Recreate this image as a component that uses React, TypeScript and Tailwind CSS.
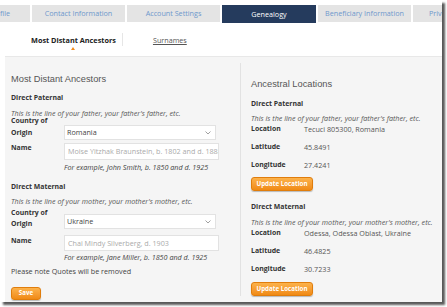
import React from 'react';

const tabs = ['Contact Information', 'Account Settings', 'Genealogy', 'Beneficiary Information'];

const Chevron: React.FC = () => (
  <svg width="6" height="4" viewBox="0 0 6 4" className="mr-[4px]">
    <path d="M0.5 0.5 L3 3 L5.5 0.5" fill="none" stroke="#888" strokeWidth="0.8" />
  </svg>
);

const OrangeButton: React.FC<{ label: string; className?: string }> = ({ label, className }) => (
  <button
    className={`rounded-[3px] border border-[#e07d0c] bg-gradient-to-b from-[#fcb24a] to-[#f08a12] text-white font-bold text-[6.2px] leading-none shadow-[0_1px_1px_rgba(0,0,0,0.25)] ${className || ''}`}
  >
    {label}
  </button>
);

const App: React.FC = () => {
  return (
    <div className="w-[447px] h-[307px] bg-white font-['Open_Sans',sans-serif]">
      <div className="w-[442px] h-[302px] bg-white overflow-hidden shadow-[3px_3px_2px_rgba(0,0,0,0.65)] flex flex-col">
        {/* tabs */}
        <div className="flex gap-[2px] pt-[5px] h-[23px] shrink-0 text-[7.2px]">
          <div className="shrink-0 w-[30px] h-[17px] bg-[#e4e4e4] flex items-center justify-end pr-[20px] text-[#6e98cc] overflow-hidden whitespace-nowrap">
            Profile
          </div>
          {tabs.map((t) => (
            <div
              key={t}
              className={
                t === 'Genealogy'
                  ? 'shrink-0 w-[94px] h-[18px] bg-[#253b5d] text-white flex items-center justify-center'
                  : 'shrink-0 w-[93px] h-[17px] bg-[#e4e4e4] text-[#6e98cc] flex items-center justify-center'
              }
            >
              {t}
            </div>
          ))}
          <div className="shrink-0 w-[40px] h-[17px] bg-[#e4e4e4] text-[#6e98cc] flex items-center pl-[16px] overflow-hidden whitespace-nowrap">
            Privacy
          </div>
        </div>

        {/* sub tabs */}
        <div className="h-[33px] shrink-0 flex items-start pt-[10px] text-[7.2px] leading-[14px]">
          <div className="ml-[31px] relative text-[7.3px] font-bold text-[#222]">
            Most Distant Ancestors
            <span className="absolute left-[40px] top-[14px] w-0 h-0 border-l-[2.5px] border-r-[2.5px] border-b-[3px] border-l-transparent border-r-transparent border-b-[#f28c1c]" />
          </div>
          <div className="ml-[6px] w-px h-[13px] bg-[#e6e6e6]" />
          <span className="ml-[30px] text-[#555] underline">Surnames</span>
        </div>

        {/* panel */}
        <div className="ml-[5px] flex-1 bg-[#f5f5f5] border-t border-[#e8e8e8] flex">
          {/* left */}
          <div className="w-[235px] pl-[6px] flex flex-col text-[7.2px] text-[#333]">
            <div className="mt-[15px] font-['Liberation_Sans',sans-serif] text-[9.3px] leading-[14px] text-[#555]">
              Most Distant Ancestors
            </div>
            <div className="mt-[6px] font-bold text-[6.9px] leading-[12px]">Direct Paternal</div>
            <div className="mt-[3px] italic text-[#555] leading-[12px]">This is the line of your father, your father's father, etc.</div>
            <div className="mt-[-4px] flex items-start">
              <div className="w-[53px] font-bold text-[6.9px] leading-[11.5px]">Country of<br />Origin</div>
              <div className="mt-[10px] w-[152px] h-[15px] bg-white border border-[#e2e2e2] flex items-center justify-between pl-[2px]">
                <span className="text-[#444]">Romania</span>
                <Chevron />
              </div>
            </div>
            <div className="mt-[2px] flex items-start">
              <div className="w-[53px] font-bold text-[6.9px] leading-[12px]">Name</div>
              <div className="mt-[1px] w-[155px] h-[17px] bg-white border border-[#e2e2e2] flex items-center pl-[3px] overflow-hidden whitespace-nowrap text-[#aaa]">
                Moise Yitzhak Braunstein, b. 1802 and d. 1888
              </div>
            </div>
            <div className="mt-[1px] ml-[53px] italic text-[#444] leading-[12px]">For example, John Smith, b. 1850 and d. 1925</div>

            <div className="mt-[8px] font-bold text-[6.9px] leading-[12px]">Direct Maternal</div>
            <div className="mt-[2px] italic text-[#555] leading-[12px]">This is the line of your mother, your mother's mother, etc.</div>
            <div className="flex items-start">
              <div className="w-[53px] font-bold text-[6.9px] leading-[11px]">Country of<br />Origin</div>
              <div className="mt-[7px] w-[152px] h-[15px] bg-white border border-[#e2e2e2] flex items-center justify-between pl-[2px]">
                <span className="text-[#444]">Ukraine</span>
                <Chevron />
              </div>
            </div>
            <div className="mt-[6px] flex items-start">
              <div className="w-[53px] font-bold text-[6.9px] leading-[12px]">Name</div>
              <div className="w-[155px] h-[16px] bg-white border border-[#e2e2e2] flex items-center pl-[3px] overflow-hidden whitespace-nowrap text-[#aaa]">
                Chai Mindy Silverberg, d. 1903
              </div>
            </div>
            <div className="ml-[53px] italic text-[#444] leading-[12px]">For example, Jane Miller, b. 1850 and d. 1925</div>
            <div className="mt-[2px] leading-[12px] text-[#444]">Please note Quotes will be removed</div>
            <OrangeButton label="Save" className="mt-[10px] w-[30px] h-[13px]" />
          </div>

          {/* divider */}
          <div className="mt-[6px] mb-[6px] w-px bg-[#e2e2e2]" />

          {/* right */}
          <div className="flex-1 pl-[10px] flex flex-col text-[7.2px] text-[#333]">
            <div className="mt-[20px] font-['Liberation_Sans',sans-serif] text-[9.3px] leading-[14px] text-[#555]">
              Ancestral Locations
            </div>
            <div className="mt-[7px] font-bold text-[6.9px] leading-[12px]">Direct Paternal</div>
            <div className="mt-[2px] italic text-[#555] leading-[12px]">This is the line of your father, your father's father, etc.</div>
            <div className="mt-[-1px] flex leading-[12px]">
              <span className="w-[53px] font-bold text-[6.9px]">Location</span>
              <span className="text-[#555]">Tecuci 805300, Romania</span>
            </div>
            <div className="mt-[6px] flex leading-[12px]">
              <span className="w-[53px] font-bold text-[6.9px]">Latitude</span>
              <span className="text-[#555]">45.8491</span>
            </div>
            <div className="mt-[6px] flex leading-[12px]">
              <span className="w-[53px] font-bold text-[6.9px]">Longitude</span>
              <span className="text-[#555]">27.4241</span>
            </div>
            <OrangeButton label="Update Location" className="mt-[6px] w-[62px] h-[14px]" />

            <div className="mt-[10px] font-bold text-[6.9px] leading-[12px]">Direct Maternal</div>
            <div className="mt-[3px] italic text-[#555] leading-[12px]">This is the line of your mother, your mother's mother, etc.</div>
            <div className="mt-[-1px] flex leading-[12px]">
              <span className="w-[53px] font-bold text-[6.9px]">Location</span>
              <span className="text-[#555]">Odessa, Odessa Oblast, Ukraine</span>
            </div>
            <div className="mt-[6px] flex leading-[12px]">
              <span className="w-[53px] font-bold text-[6.9px]">Latitude</span>
              <span className="text-[#555]">46.4825</span>
            </div>
            <div className="mt-[6px] flex leading-[12px]">
              <span className="w-[53px] font-bold text-[6.9px]">Longitude</span>
              <span className="text-[#555]">30.7233</span>
            </div>
            <OrangeButton label="Update Location" className="mt-[7px] w-[62px] h-[14px]" />
          </div>
        </div>
      </div>
    </div>
  );
};

export default App;
